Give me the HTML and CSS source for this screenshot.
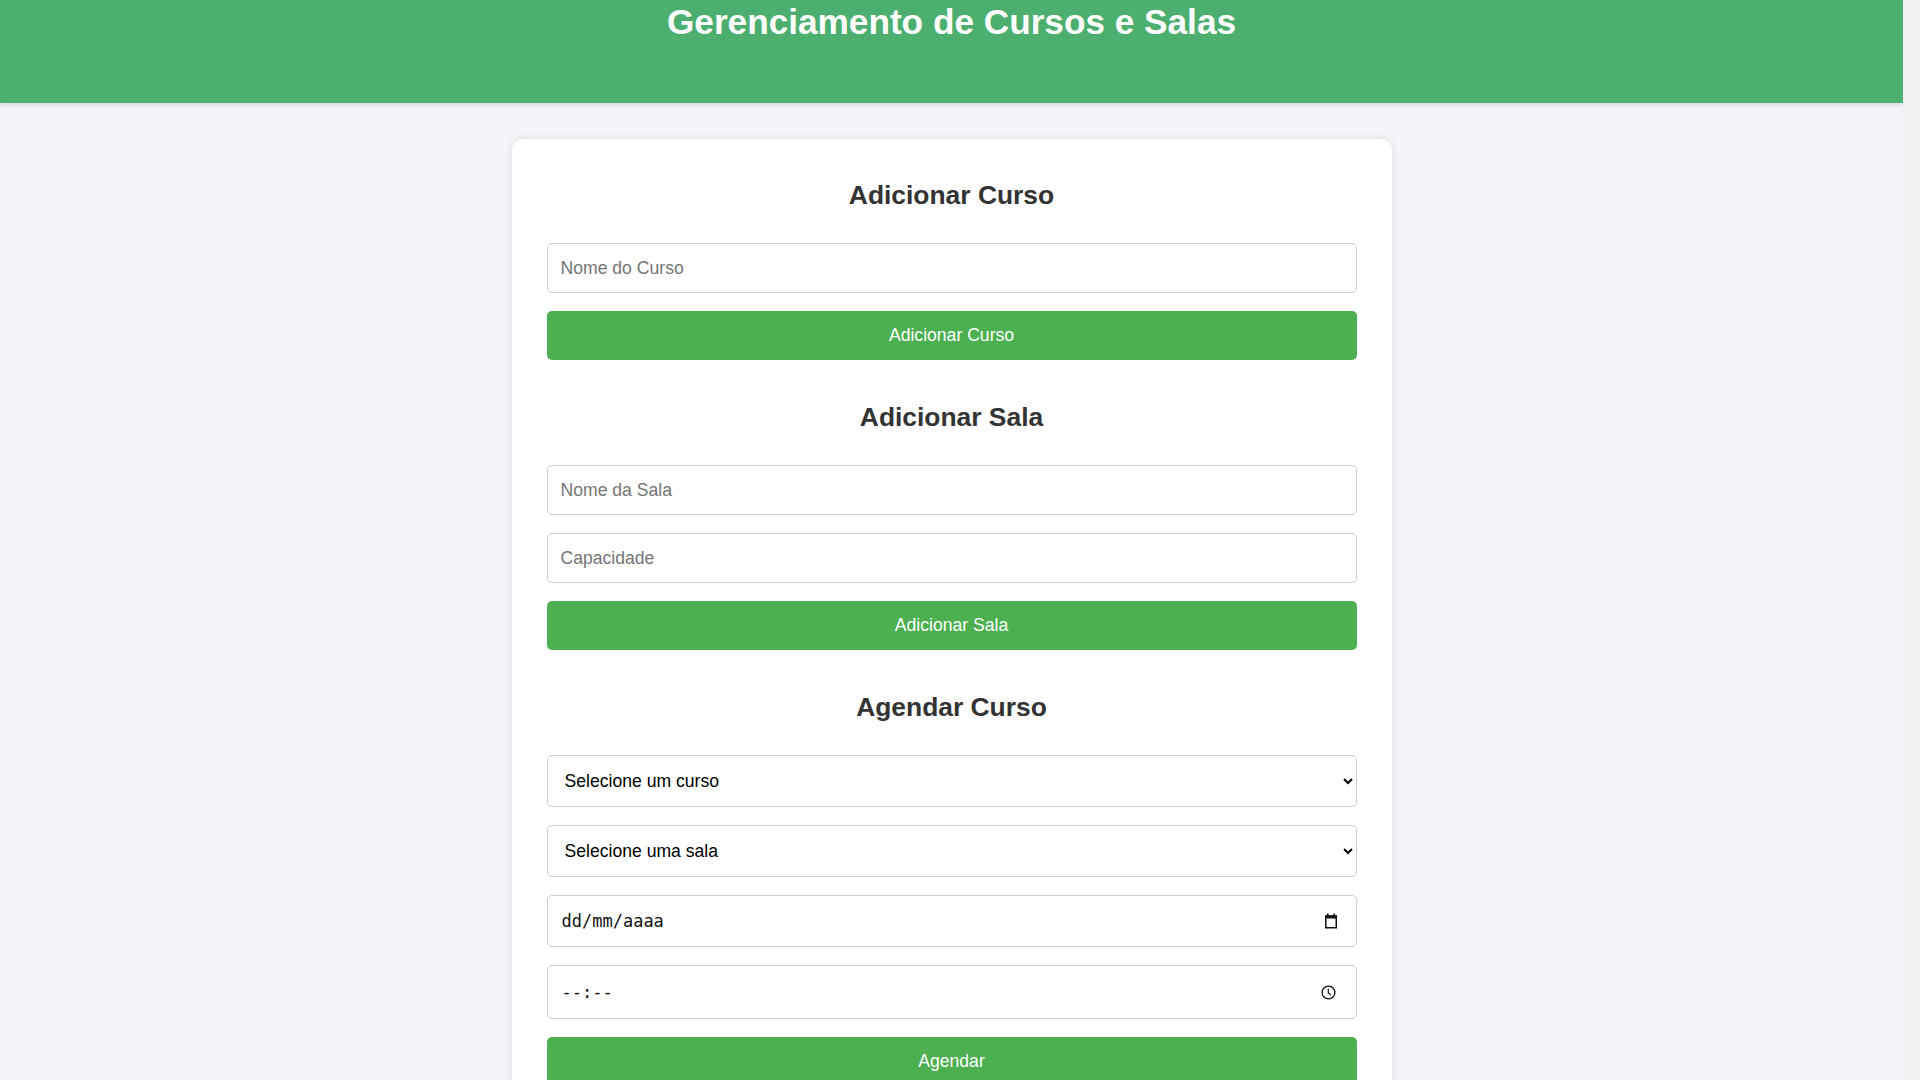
FILE: index.html
```html
<!DOCTYPE html>
<html lang="pt-BR">
<head>
<meta charset="utf-8">
<title>Gerenciamento de Cursos e Salas</title>
<link rel="stylesheet" href="styles.css">
</head>
<body>
<header class="site-header">
  <h1 class="site-title">Gerenciamento de Cursos e Salas</h1>
</header>
<main class="card">
  <section class="section">
    <h2 class="section-title">Adicionar Curso</h2>
    <div class="controls">
      <input class="field" type="text" placeholder="Nome do Curso">
      <button class="btn" type="button">Adicionar Curso</button>
    </div>
  </section>
  <section class="section">
    <h2 class="section-title">Adicionar Sala</h2>
    <div class="controls">
      <input class="field" type="text" placeholder="Nome da Sala">
      <input class="field" type="text" placeholder="Capacidade">
      <button class="btn" type="button">Adicionar Sala</button>
    </div>
  </section>
  <section class="section">
    <h2 class="section-title">Agendar Curso</h2>
    <div class="controls">
      <select class="field field-select"><option>Selecione um curso</option></select>
      <select class="field field-select"><option>Selecione uma sala</option></select>
      <label class="field field-picker field-date">
        <input class="picker-input" type="text" placeholder="dd/mm/aaaa">
        <svg class="picker-icon" width="14" height="16" viewBox="0 0 14 16" aria-hidden="true">
          <rect x="1.75" y="3" width="10.5" height="11.75" fill="none" stroke="#111" stroke-width="1.5"/>
          <rect x="1" y="2.5" width="12" height="3" fill="#111"/>
          <rect x="3" y="0.5" width="1.6" height="2.5" fill="#111"/>
          <rect x="9.4" y="0.5" width="1.6" height="2.5" fill="#111"/>
        </svg>
      </label>
      <label class="field field-picker field-time">
        <input class="picker-input" type="text" placeholder="--:--">
        <svg class="picker-icon" width="15" height="15" viewBox="0 0 15 15" aria-hidden="true">
          <circle cx="7.5" cy="7.5" r="6.4" fill="none" stroke="#111" stroke-width="1.3"/>
          <path d="M7.3 3.8 V7.7 L9.9 10.1" fill="none" stroke="#111" stroke-width="1.2"/>
        </svg>
      </label>
      <button class="btn" type="button">Agendar</button>
    </div>
  </section>
</main>
</body>
</html>
```
FILE: styles.css
```css
html, body {
  margin: 0;
  padding: 0;
}

html {
  background: #f1f1f1;
}

body {
  margin-right: 17px;
  min-height: 100vh;
  background: #f4f4f9;
  font-family: "Liberation Sans", Arial, sans-serif;
  color: #333;
  overflow: hidden;
}

.site-header {
  background: #4caf6f;
  color: #fff;
  text-align: center;
  padding: 2px 0 61px;
  box-shadow: 0 2px 5px rgba(0, 0, 0, 0.12);
}

.site-title {
  margin: 0;
  font-size: 35.2px;
  line-height: 40px;
  font-weight: bold;
}

.card {
  display: block;
  width: 880px;
  box-sizing: border-box;
  margin: 36px auto 35px;
  padding: 41px 35px 35px;
  background: #fff;
  border-radius: 10px;
  box-shadow: 0 0 10px rgba(0, 0, 0, 0.1);
}

.section + .section {
  margin-top: 42px;
}

.section-title {
  margin: 0 0 33px;
  text-align: center;
  font-size: 26.4px;
  line-height: 30px;
  font-weight: bold;
  color: #333;
}

.controls {
  display: flex;
  flex-direction: column;
  gap: 18px;
}

.field {
  box-sizing: border-box;
  width: 100%;
  height: 50px;
  margin: 0;
  padding: 0 13px;
  border: 1px solid #ccc;
  border-radius: 5px;
  background: #fff;
  color: #000;
  font-family: "Liberation Sans", Arial, sans-serif;
  font-size: 17.6px;
  outline: none;
}

.field::placeholder {
  color: #757575;
}

.field-select {
  height: 52px;
}

.field-picker {
  display: flex;
  align-items: center;
  height: 52px;
  padding-right: 18px;
  cursor: text;
}

.field-time {
  height: 54px;
  padding-right: 20px;
}

.picker-input {
  flex: 1;
  min-width: 0;
  border: none;
  outline: none;
  padding: 0 0 0 1px;
  margin: 0;
  background: transparent;
  color: #000;
  font-family: "DejaVu Sans Mono", "Liberation Mono", monospace;
  font-size: 17px;
}

.picker-input::placeholder {
  color: #111;
}

.picker-icon {
  flex: none;
  display: block;
}

.btn {
  display: block;
  width: 100%;
  height: 49px;
  margin: 0;
  padding: 0;
  border: none;
  border-radius: 5px;
  background: #4caf50;
  color: #fff;
  font-family: "Liberation Sans", Arial, sans-serif;
  font-size: 17.6px;
  cursor: pointer;
}
```
